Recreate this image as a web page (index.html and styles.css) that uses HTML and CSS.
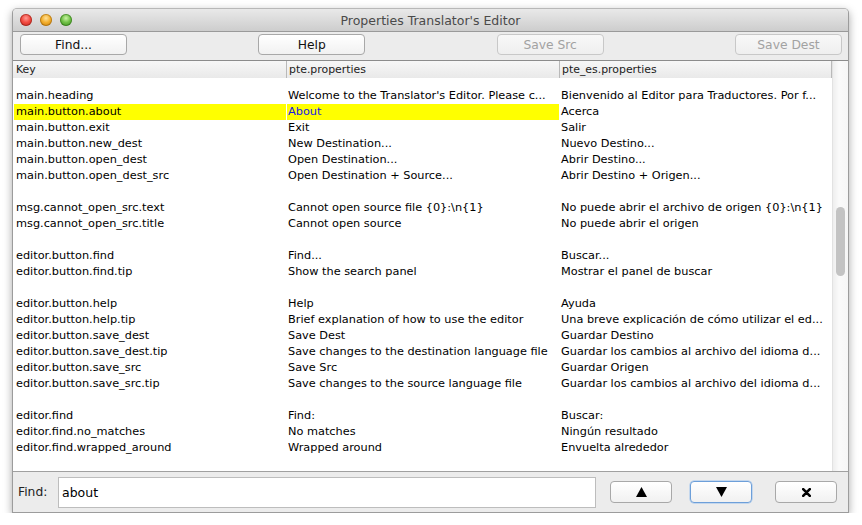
FILE: index.html
```html
<!DOCTYPE html>
<html>
<head>
<meta charset="utf-8">
<link rel="stylesheet" href="styles.css">
</head>
<body>
<div class="window">
  <div class="titlebar">
    <div class="lights">
      <span class="light red"></span><span class="light yellow"></span><span class="light green"></span>
    </div>
    <div class="title">Properties Translator's Editor</div>
  </div>
  <div class="toolbar">
    <button class="btn">Find...</button>
    <button class="btn">Help</button>
    <button class="btn disabled">Save Src</button>
    <button class="btn disabled">Save Dest</button>
  </div>
  <div class="table">
    <div class="main">
      <div class="header">
        <div class="hcell">Key</div>
        <div class="hcell">pte.properties</div>
        <div class="hcell">pte_es.properties</div>
      </div>
      <div class="rows">
        <div class="spacer"></div>
        <div class="row"><span>main.heading</span><span>Welcome to the Translator's Editor. Please c...</span><span>Bienvenido al Editor para Traductores. Por f...</span></div>
        <div class="row sel"><span>main.button.about</span><span>About</span><span>Acerca</span></div>
        <div class="row"><span>main.button.exit</span><span>Exit</span><span>Salir</span></div>
        <div class="row"><span>main.button.new_dest</span><span>New Destination...</span><span>Nuevo Destino...</span></div>
        <div class="row"><span>main.button.open_dest</span><span>Open Destination...</span><span>Abrir Destino...</span></div>
        <div class="row"><span>main.button.open_dest_src</span><span>Open Destination + Source...</span><span>Abrir Destino + Origen...</span></div>
        <div class="row"><span></span><span></span><span></span></div>
        <div class="row"><span>msg.cannot_open_src.text</span><span>Cannot open source file {0}:\n{1}</span><span>No puede abrir el archivo de origen {0}:\n{1}</span></div>
        <div class="row"><span>msg.cannot_open_src.title</span><span>Cannot open source</span><span>No puede abrir el origen</span></div>
        <div class="row"><span></span><span></span><span></span></div>
        <div class="row"><span>editor.button.find</span><span>Find...</span><span>Buscar...</span></div>
        <div class="row"><span>editor.button.find.tip</span><span>Show the search panel</span><span>Mostrar el panel de buscar</span></div>
        <div class="row"><span></span><span></span><span></span></div>
        <div class="row"><span>editor.button.help</span><span>Help</span><span>Ayuda</span></div>
        <div class="row"><span>editor.button.help.tip</span><span>Brief explanation of how to use the editor</span><span>Una breve explicación de cómo utilizar el ed...</span></div>
        <div class="row"><span>editor.button.save_dest</span><span>Save Dest</span><span>Guardar Destino</span></div>
        <div class="row"><span>editor.button.save_dest.tip</span><span>Save changes to the destination language file</span><span>Guardar los cambios al archivo del idioma d...</span></div>
        <div class="row"><span>editor.button.save_src</span><span>Save Src</span><span>Guardar Origen</span></div>
        <div class="row"><span>editor.button.save_src.tip</span><span>Save changes to the source language file</span><span>Guardar los cambios al archivo del idioma d...</span></div>
        <div class="row"><span></span><span></span><span></span></div>
        <div class="row"><span>editor.find</span><span>Find:</span><span>Buscar:</span></div>
        <div class="row"><span>editor.find.no_matches</span><span>No matches</span><span>Ningún resultado</span></div>
        <div class="row"><span>editor.find.wrapped_around</span><span>Wrapped around</span><span>Envuelta alrededor</span></div>
        <div class="row"><span></span><span></span><span></span></div>
      </div>
    </div>
    <div class="scrollbar">
      <div class="thumb"></div>
    </div>
  </div>
  <div class="findbar">
    <label class="find-label">Find:</label>
    <div class="find-input">about</div>
    <button class="btn small"><svg width="11" height="10" viewBox="0 0 11 10"><polygon points="5.5,0 11,10 0,10" fill="#000"/></svg></button>
    <button class="btn small focused"><svg width="11" height="10" viewBox="0 0 11 10"><polygon points="0,0 11,0 5.5,10" fill="#000"/></svg></button>
    <button class="btn small last"><svg width="9" height="9" viewBox="0 0 9 9"><path d="M1.2 1.2 L7.8 7.8 M7.8 1.2 L1.2 7.8" stroke="#000" stroke-width="2.6" stroke-linecap="round"/></svg></button>
  </div>
</div>
</body>
</html>
```
FILE: styles.css
```css
* { box-sizing: border-box; }
html, body { margin: 0; padding: 0; background: #fff; }
body {
  padding: 8px 13px 0 12px;
  font-family: "DejaVu Sans", "Liberation Sans", sans-serif;
}
.window {
  width: 837px;
  height: 505px;
  display: flex;
  flex-direction: column;
  background: #ececec;
  border: 1px solid #9c9c9c;
  border-top-color: #b8b8b8;
  border-radius: 5px 5px 0 0;
  box-shadow: 0 3px 9px rgba(0,0,0,0.35);
  overflow: hidden;
}
.titlebar {
  height: 23px;
  flex: none;
  position: relative;
  background: linear-gradient(#e9e9e9, #cdcdcd);
  border-bottom: 1px solid #9a9a9a;
  display: flex;
  align-items: center;
  justify-content: center;
}
.lights {
  position: absolute;
  left: 7px;
  top: 5px;
  display: flex;
  gap: 8px;
}
.light {
  width: 12px;
  height: 12px;
  border-radius: 50%;
  display: block;
}
.red { background: radial-gradient(circle at 50% 35%, #ff9a93 0%, #f2493f 45%, #b9261e 100%); box-shadow: inset 0 0 0 1px rgba(120,20,10,0.45); }
.yellow { background: radial-gradient(circle at 50% 35%, #ffe29a 0%, #f3ae2c 45%, #c17a0b 100%); box-shadow: inset 0 0 0 1px rgba(130,80,0,0.45); }
.green { background: radial-gradient(circle at 50% 35%, #c9f3a3 0%, #6fc046 45%, #3a8a1d 100%); box-shadow: inset 0 0 0 1px rgba(30,90,10,0.45); }
.title {
  font-size: 12.5px;
  color: #4a4a4a;
  padding-top: 1px;
}
.toolbar {
  height: 28px;
  flex: none;
  display: flex;
  justify-content: space-between;
  align-items: flex-start;
  padding: 2px 6px 0 7px;
  background: #ececec;
}
.btn {
  flex: none;
  width: 107px;
  height: 21px;
  font-family: "DejaVu Sans", "Liberation Sans", sans-serif;
  font-size: 12.3px;
  color: #111;
  background: linear-gradient(#ffffff, #f1f1f1);
  border: 1px solid #a8a8a8;
  border-radius: 4px;
  padding: 0;
  display: flex;
  align-items: center;
  justify-content: center;
}
.btn.disabled {
  color: #a2a2a2;
  border-color: #c8c8c8;
  background: linear-gradient(#f8f8f8, #efefef);
}
.table {
  flex: none;
  height: 412px;
  display: flex;
  background: #fff;
  border-top: 1px solid #8c8c8c;
  border-bottom: 1px solid #a0a0a0;
}
.main {
  flex: 1;
  display: flex;
  flex-direction: column;
  font-size: 11.3px;
  overflow: hidden;
}
.header {
  height: 17px;
  flex: none;
  display: grid;
  grid-template-columns: 274px 273px 272px;
  background: linear-gradient(#f7f7f7, #e9e9e9);
}
.hcell {
  font-size: 10.9px;
  color: #222;
  padding: 2px 0 0 2px;
  border-right: 1px solid #b9b9b9;
  line-height: 13px;
}
.hcell:first-child { padding-left: 3px; }
.rows { flex: 1; display: flex; flex-direction: column; }
.spacer { height: 10px; flex: none; }
.row {
  flex: none;
  height: 16px;
  display: grid;
  grid-template-columns: 272px 272px 275px;
  column-gap: 1px;
  padding-left: 1px;
  line-height: 16px;
  color: #000;
}
.row span { padding-left: 1px; white-space: nowrap; overflow: hidden; }
.row span:first-child { padding-left: 2px; }
.row.sel span:nth-child(1), .row.sel span:nth-child(2) { background: #ffff00; }
.row.sel span:nth-child(2) { color: #1a1ae6; }
.scrollbar {
  width: 16px;
  flex: none;
  position: relative;
  background: linear-gradient(90deg, #eeeeee, #fafafa 40%, #f6f6f6);
  border-left: 1px solid #e2e2e2;
}
.thumb {
  position: absolute;
  left: 3px;
  top: 146px;
  width: 9px;
  height: 69px;
  border-radius: 5px;
  background: #c3c3c3;
}
.findbar {
  flex: 1;
  display: flex;
  align-items: center;
  padding: 0 0 0 5px;
  background: #ececec;
}
.find-label {
  flex: none;
  font-size: 12.3px;
  color: #222;
  width: 40px;
}
.find-input {
  flex: none;
  width: 538px;
  height: 31px;
  background: #fff;
  border: 1px solid #bdbdbd;
  font-size: 12.5px;
  line-height: 29px;
  padding-left: 3px;
  color: #000;
  margin-right: 14px;
}
.btn.small {
  width: 62px;
  height: 22px;
  margin-right: 18px;
}
.btn.small.focused {
  border-color: #6d9fd9;
  box-shadow: 0 0 0 0.5px #9cc2ee;
  margin-right: 23px;
}
.btn.small.last { margin-right: 0; }
```
